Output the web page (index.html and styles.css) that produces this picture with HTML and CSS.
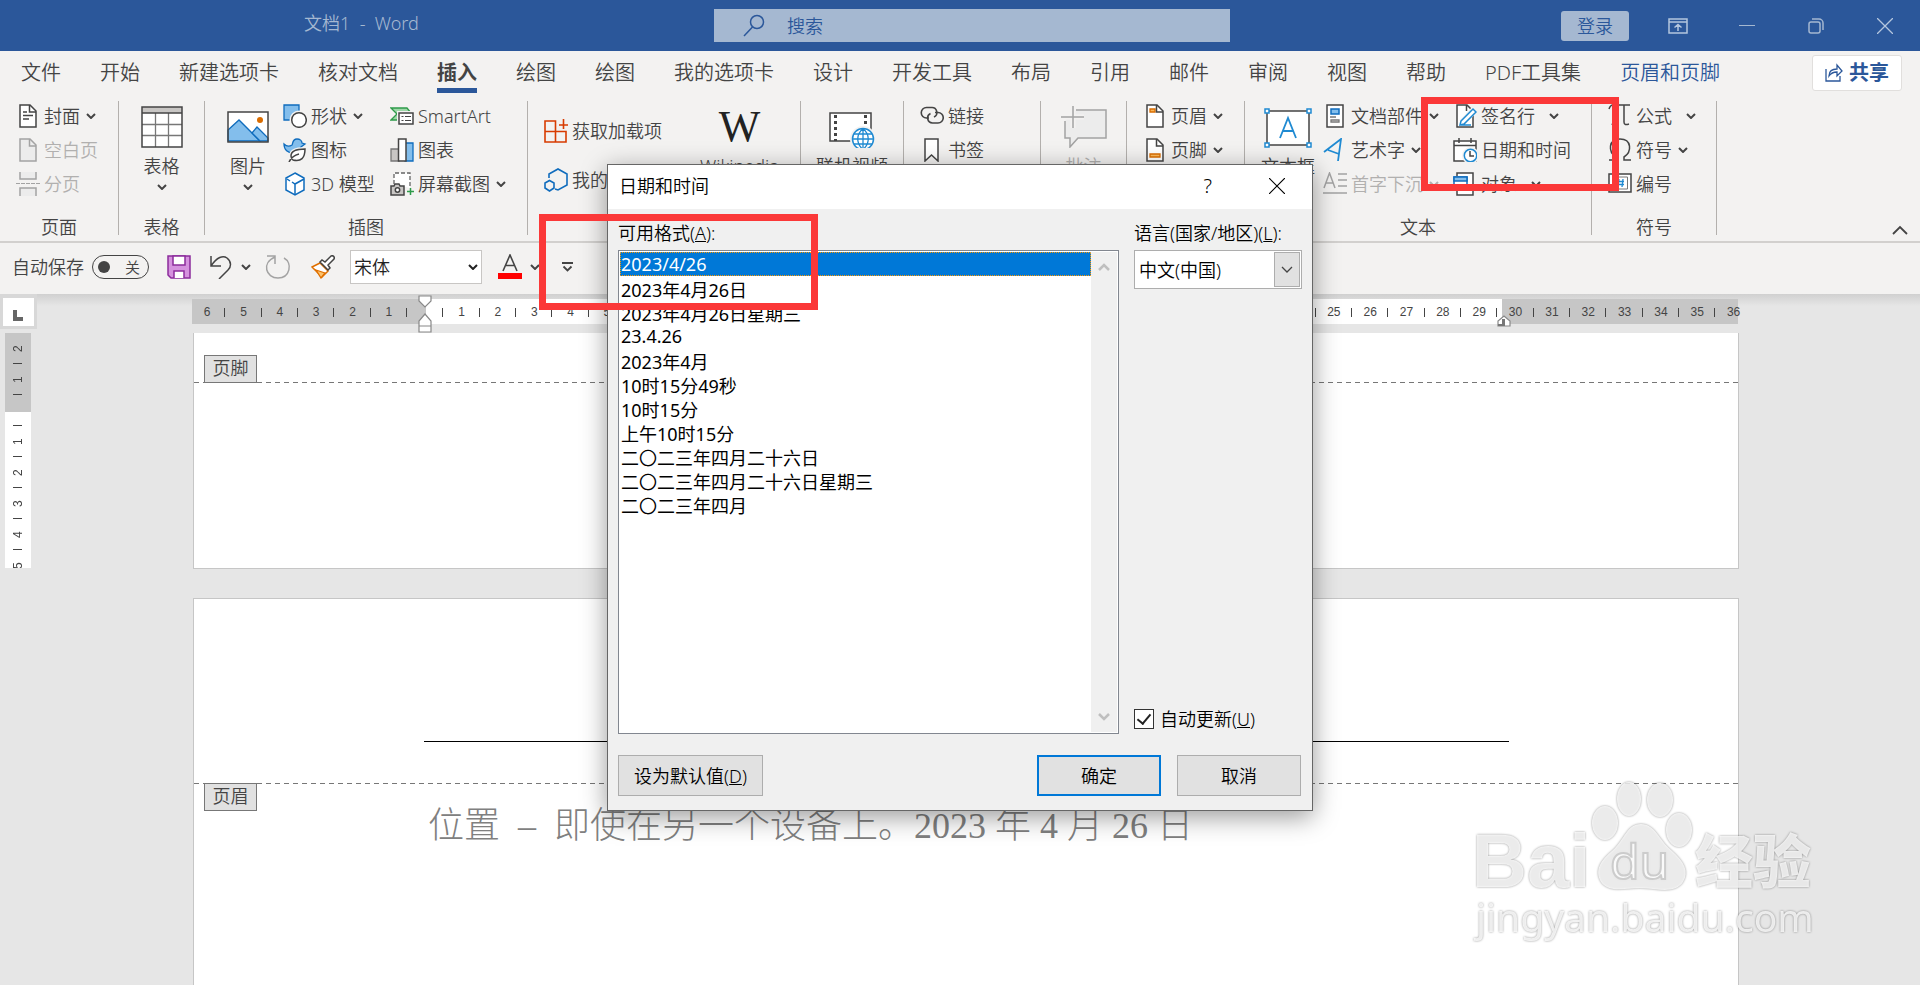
FILE: index.html
```
<!DOCTYPE html>
<html lang="zh-CN">

<head>
    <meta charset="UTF-8">
    <meta name="viewport" content="width=device-width, initial-scale=1.0">
    <title>文档1 - Word</title>
    <link rel="stylesheet" href="styles.css">
</head>

<body>
    <svg class="defs" aria-hidden="true">
        <symbol id="chev" viewBox="0 0 10 6"><path d="M1 1l4 4 4-4" fill="none" stroke="currentColor" stroke-width="2"/></symbol>
    </svg>

    <header class="titlebar">
        <div class="doc-title">文档1 &nbsp;- &nbsp;Word</div>
        <div class="search">
            <svg width="22" height="24" viewBox="0 0 22 24"><circle cx="14" cy="8" r="6.5" fill="none" stroke="#2b579a" stroke-width="1.5"/><path d="M9.500 13L1 22" stroke="#2b579a" stroke-width="1.5"/></svg>
            <input type="text" placeholder="搜索" aria-label="搜索">
        </div>
        <div class="window-controls">
            <button class="login">登录</button>
            <button class="win"><svg width="20" height="16" viewBox="0 0 20 16"><path d="M1 1h18v14H1zM1 4h18M10 13V7M6.500 9.500L10 6.500l3.500 3" fill="none" stroke="#b4c6de" stroke-width="1.500"/></svg></button>
            <button class="win"><svg width="16" height="16" viewBox="0 0 16 16"><path d="M0 7.500h16" stroke="#a5b8d1"/></svg></button>
            <button class="win"><svg width="16" height="16" viewBox="0 0 16 16"><rect x="1" y="4" width="11" height="11" rx="2" fill="none" stroke="#a5b8d1" stroke-width="1.500"/><path d="M4 1h7a4 4 0 0 1 4 4v7" fill="none" stroke="#a5b8d1" stroke-width="1.500"/></svg></button>
            <button class="win"><svg width="16" height="16" viewBox="0 0 16 16"><path d="M0 0l16 16M16 0L0 16" stroke="#b4c6de" stroke-width="1.300"/></svg></button>
        </div>
    </header>

    <nav class="tabs">
        <a href="#">文件</a>
        <a href="#">开始</a>
        <a href="#">新建选项卡</a>
        <a href="#">核对文档</a>
        <a href="#" class="active">插入</a>
        <a href="#">绘图</a>
        <a href="#">绘图</a>
        <a href="#">我的选项卡</a>
        <a href="#">设计</a>
        <a href="#">开发工具</a>
        <a href="#">布局</a>
        <a href="#">引用</a>
        <a href="#">邮件</a>
        <a href="#">审阅</a>
        <a href="#">视图</a>
        <a href="#">帮助</a>
        <a href="#">PDF工具集</a>
        <a href="#" class="context">页眉和页脚</a>
        <button class="share">
            <svg width="18" height="20" viewBox="0 0 18 20"><path d="M1 6v12h14v-5M4 13c0-5 3-7 8-7V2l5 6-5 5V9c-4 0-6 1-8 4z" fill="none" stroke="#2b579a" stroke-width="1.300"/></svg>
            共享
        </button>
    </nav>

    <div class="ribbon">
        <section class="group g-pages">
            <div class="content">
                <div class="col">
                    <button class="item"><svg class="icon" viewBox="0 0 24 24"><path d="M4 1h10l6 6v16H4z" fill="#fff" stroke="#444" stroke-width="1.500"/><path d="M13.500 1v7H20M7 8h4M7 11.500h10M7 15h6" fill="none" stroke="#444" stroke-width="1.500"/></svg>封面<svg class="chev"><use href="#chev"/></svg></button>
                    <button class="item off"><svg class="icon" viewBox="0 0 24 24"><path d="M4 1h10l6 6v16H4z" fill="#ececec" stroke="#a3a3a3" stroke-width="1.500"/><path d="M13.500 1v7H20" fill="none" stroke="#a3a3a3" stroke-width="1.500"/></svg>空白页</button>
                    <button class="item off"><svg class="icon" viewBox="0 0 24 24"><path d="M4 0v7h16V0M4 24v-8h16v8" fill="#ececec" stroke="#a3a3a3" stroke-width="1.500"/><path d="M0 11.500h24" stroke="#a3a3a3" stroke-dasharray="4 1"/></svg>分页</button>
                </div>
            </div>
            <div class="label">页面</div>
        </section>

        <section class="group g-table">
            <div class="content center">
                <button class="big">
                    <svg width="42" height="42" viewBox="0 0 42 42"><path d="M1 1h40v40H1z" fill="#fff"/><path d="M1 1h40v6H1z" fill="#c8c6c4"/><path d="M1 18.500h40M1 29.500h40M14.500 7v34M27.500 7v34" stroke="#777" stroke-width="1.300"/><path d="M1 1h40v40H1zM1 7h40" fill="none" stroke="#444" stroke-width="1.500"/></svg>
                    <span>表格</span>
                    <svg class="chev"><use href="#chev"/></svg>
                </button>
            </div>
            <div class="label">表格</div>
        </section>

        <section class="group g-illus">
            <div class="content">
                <button class="big">
                    <svg width="42" height="42" viewBox="0 0 42 42"><path d="M1 6h40v30H1z" fill="#fff"/><path d="M1 24l11-10 21 21H1z" fill="#83beec" stroke="#0f6cbd" stroke-width="1.300"/><path d="M25 27l5-6 11 11v3H33z" fill="#83beec" stroke="#0f6cbd" stroke-width="1.300"/><circle cx="33" cy="14" r="3" fill="#d96c00"/><path d="M1 6h40v30H1z" fill="none" stroke="#444" stroke-width="1.500"/></svg>
                    <span>图片</span>
                    <svg class="chev"><use href="#chev"/></svg>
                </button>
                <div class="col">
                    <button class="item"><svg class="icon" viewBox="0 0 24 24"><path d="M1 1h15v15H1z" fill="#83beec" stroke="#0f6cbd" stroke-width="1.300"/><circle cx="16" cy="16" r="9.500" fill="#f3f2f1"/><circle cx="16" cy="16" r="7.300" fill="#fff" stroke="#444" stroke-width="1.500"/></svg>形状<svg class="chev"><use href="#chev"/></svg></button>
                    <button class="item"><svg class="icon" viewBox="0 0 24 24"><path d="M1 6c2 2 5 3 8 1 1-1 0-6 5-6 3 0 5 2 5 4l3 1-4 3c-1 4-4 6-8 6-5 0-9-3-9-9z" fill="#83beec" stroke="#0f6cbd" stroke-width="1.300"/><path d="M22 11c-9 0-14 2-14 7 0 2 1 3 2 4 8 2 12-2 12-11z" fill="#fff" stroke="#f3f2f1" stroke-width="4"/><path d="M22 11c-9 0-14 2-14 7 0 2 1 3 2 4 8 2 12-2 12-11zM6 24c2-4 6-7 10-8" fill="#fff" stroke="#444" stroke-width="1.500"/></svg>图标</button>
                    <button class="item"><svg class="icon" viewBox="0 0 24 24"><path d="M12 1l9 5v12l-9 5-9-5V6z" fill="#fff" stroke="#0f6cbd" stroke-width="1.500"/><path d="M4 7l3 2m2 1l3 2 9-5M12 12v10" fill="none" stroke="#0f6cbd" stroke-width="1.500"/></svg>3D 模型</button>
                </div>
                <div class="col">
                    <button class="item"><svg class="icon" viewBox="0 0 24 24"><path d="M1 4h16l4 5v7H1l6-6z" fill="#9fd8a9" stroke="#2e9a49" stroke-width="1.300"/><path d="M9 9h14v11H9z" fill="#fff" stroke="#f3f2f1" stroke-width="4"/><path d="M9 9h14v11H9z" fill="#fff" stroke="#444" stroke-width="1.500"/><path d="M11.500 12.500h2m1.500 0h6m-9.500 4h2m1.500 0h6" stroke="#444"/></svg>SmartArt</button>
                    <button class="item"><svg class="icon" viewBox="0 0 24 24"><path d="M1 11h8v12H1z" fill="#c8c6c4" stroke="#777" stroke-width="1.300"/><path d="M15 5h8v18h-8z" fill="#83beec" stroke="#0f6cbd" stroke-width="1.300"/><path d="M8.500 1H16v22H8.500z" fill="#fff" stroke="#444" stroke-width="1.500"/></svg>图表</button>
                    <button class="item"><svg class="icon" viewBox="0 0 24 24"><path d="M4 12V1h16v15" fill="#fff" stroke="#666" stroke-width="1.300" stroke-dasharray="4 2"/><path d="M1 14h3l1-2h4l1 2h4v9H1z" fill="#c8c6c4" stroke="#444" stroke-width="1.500"/><circle cx="7.500" cy="18" r="2.200" fill="#fff" stroke="#444" stroke-width="1.500"/><path d="M20.500 16v7M17 19.500h7" stroke="#2e9a49" stroke-width="1.500"/></svg>屏幕截图<svg class="chev"><use href="#chev"/></svg></button>
                </div>
            </div>
            <div class="label">插图</div>
        </section>

        <section class="group g-addins">
            <div class="content">
                <div class="col wide">
                    <button class="item"><svg class="icon" viewBox="0 0 24 24"><path d="M1 2h10.500v21H1zM1 12.500h21V23H1M15 6h9M19.500 0v10" fill="none" stroke="#d83b01" stroke-width="1.600"/></svg>获取加载项</button>
                    <button class="item"><svg class="icon" viewBox="0 0 24 24"><path d="M5 10V6l9-5 9 5v11l-9 5-3-1" fill="none" stroke="#0f6cbd" stroke-width="1.600"/><path d="M5.500 12.500l4.500 2.500v5l-4.500 3L1 20v-5z" fill="none" stroke="#0f6cbd" stroke-width="1.600"/></svg>我的加载项</button>
                </div>
                <button class="big wiki">
                    <span class="wiki-w">W</span>
                    <span>Wikipedia</span>
                </button>
            </div>
            <div class="label">加载项</div>
        </section>

        <section class="group g-media">
            <div class="content center">
                <button class="big">
                    <svg width="46" height="42" viewBox="0 0 46 42"><path d="M1 7h41v28H1z" fill="#fff" stroke="#444" stroke-width="1.500"/><path d="M6.500 9v26M36.500 9v26" stroke="#444" stroke-width="3" stroke-dasharray="3 3"/><circle cx="34" cy="33" r="13" fill="#f3f2f1"/><circle cx="34" cy="33" r="10.500" fill="#fff" stroke="#1f8ad2" stroke-width="1.500"/><path d="M23.500 33h21M25 28h18M25 38h18M34 22.500v21M34 22.500c-7 6-7 15 0 21M34 22.500c7 6 7 15 0 21" fill="none" stroke="#1f8ad2" stroke-width="1.300"/></svg>
                    <span>联机视频</span>
                </button>
            </div>
            <div class="label">媒体</div>
        </section>

        <section class="group g-links">
            <div class="content">
                <div class="col">
                    <button class="item"><svg class="icon" viewBox="0 0 24 24"><path d="M9 14H6.500a5 5 0 0 1 0-10.500h5a5 5 0 0 1 2.500 9.500" fill="none" stroke="#444" stroke-width="1.600"/><path d="M15 8.500h3a5 5 0 0 1 0 10.500h-5.500a5 5 0 0 1-2-9.500" fill="none" stroke="#444" stroke-width="1.600"/></svg>链接</button>
                    <button class="item"><svg class="icon" viewBox="0 0 24 24"><path d="M5 1h13v22l-6.500-6L5 23z" fill="#fff" stroke="#444" stroke-width="1.500"/></svg>书签</button>
                </div>
            </div>
            <div class="label">链接</div>
        </section>

        <section class="group g-comment">
            <div class="content center">
                <button class="big off">
                    <svg width="46" height="42" viewBox="0 0 46 42"><path d="M15 4h30v28H17l-8 9v-9H4V15" fill="#ececec" stroke="#a3a3a3" stroke-width="1.500"/><path d="M12 0v22M0 11h23" stroke="#f3f2f1" stroke-width="5"/><path d="M12 0v22M0 11h23" stroke="#a3a3a3" stroke-width="1.500"/></svg>
                    <span>批注</span>
                </button>
            </div>
            <div class="label">批注</div>
        </section>

        <section class="group g-header">
            <div class="content">
                <div class="col">
                    <button class="item"><svg class="icon" viewBox="0 0 24 24"><path d="M4 1h10l6 6v16H4z" fill="#fff" stroke="#444" stroke-width="1.500"/><path d="M7 5h5v3H7z" fill="#fcb95a" stroke="#d96c00" stroke-width="1.300"/><path d="M13.500 1v7H20" fill="none" stroke="#444" stroke-width="1.500"/></svg>页眉<svg class="chev"><use href="#chev"/></svg></button>
                    <button class="item"><svg class="icon" viewBox="0 0 24 24"><path d="M4 1h10l6 6v16H4z" fill="#fff" stroke="#444" stroke-width="1.500"/><path d="M7 16h10v3H7z" fill="#fcb95a" stroke="#d96c00" stroke-width="1.300"/><path d="M13.500 1v7H20" fill="none" stroke="#444" stroke-width="1.500"/></svg>页脚<svg class="chev"><use href="#chev"/></svg></button>
                </div>
            </div>
            <div class="label">页眉和页脚</div>
        </section>

        <section class="group g-text">
            <div class="content">
                <button class="big">
                    <svg width="48" height="42" viewBox="0 0 48 42"><path d="M3 5h42v34H3z" fill="#fff" stroke="#444" stroke-width="1.500"/><path d="M16 32l8-20 8 20M19 25h10" fill="none" stroke="#1f8ad2" stroke-width="1.800"/><path d="M1 3h4v4H1zM43 3h4v4h-4zM1 37h4v4H1zM43 37h4v4h-4z" fill="#fff" stroke="#1f8ad2" stroke-width="1.500"/></svg>
                    <span>文本框</span>
                </button>
                <div class="col">
                    <button class="item"><svg class="icon" viewBox="0 0 24 24"><path d="M4 1h16v22H4z" fill="#fff" stroke="#444" stroke-width="1.500"/><path d="M8 5h8v5H8z" fill="#83beec" stroke="#0f6cbd" stroke-width="1.500"/><path d="M7 13h6M8 16h8v2H8z" fill="none" stroke="#777" stroke-width="1.300"/></svg>文档部件<svg class="chev"><use href="#chev"/></svg></button>
                    <button class="item"><svg class="icon" viewBox="0 0 24 24"><path d="M1 14L18 1l-3 22M5 12l11 4" fill="none" stroke="#1f8ad2" stroke-width="1.800"/></svg>艺术字<svg class="chev"><use href="#chev"/></svg></button>
                    <button class="item off"><svg class="icon" viewBox="0 0 24 24"><path d="M1 16L6.500 1 12 16M3 11h7M15 2h9M15 8h9M15 14h9M0 21h24" fill="none" stroke="#a3a3a3" stroke-width="1.500"/></svg>首字下沉<svg class="chev"><use href="#chev"/></svg></button>
                </div>
                <div class="col third">
                    <button class="item gap"><svg class="icon" viewBox="0 0 24 24"><path d="M4 1h10l6 6v16H4z" fill="#fff" stroke="#444" stroke-width="1.500"/><path d="M13.500 1v6" fill="none" stroke="#444" stroke-width="1.500"/><path d="M9 19L22 5" stroke="#f3f2f1" stroke-width="7"/><path d="M8 17L20 5l3 3-12 12-4 1zM7 21h11" fill="#fff" stroke="#1f8ad2" stroke-width="1.500"/></svg>签名行<svg class="chev"><use href="#chev"/></svg></button>
                    <button class="item"><svg class="icon" viewBox="0 0 24 24"><path d="M1 3h22v20H1z" fill="#fff" stroke="#444" stroke-width="1.500"/><path d="M1 7.500h22M6 0v5M18 0v5" stroke="#444" stroke-width="1.500"/><circle cx="17.500" cy="17.500" r="8.500" fill="#f3f2f1"/><circle cx="17.500" cy="17.500" r="6.200" fill="#fff" stroke="#1f8ad2" stroke-width="1.500"/><path d="M17 13v5h4" fill="none" stroke="#444" stroke-width="1.500"/></svg>日期和时间</button>
                    <button class="item gap"><svg class="icon" viewBox="0 0 24 24"><path d="M4 4V1h16v22H4v-5" fill="#fff" stroke="#444" stroke-width="1.500"/><path d="M1 5h13v13H1z" fill="#fff" stroke="#0f6cbd" stroke-width="1.500"/><path d="M1 5h13v4H1z" fill="#83beec" stroke="#0f6cbd" stroke-width="1.500"/></svg>对象<svg class="chev"><use href="#chev"/></svg></button>
                </div>
            </div>
            <div class="label">文本</div>
        </section>

        <section class="group g-symbols">
            <div class="content">
                <div class="col">
                    <button class="item gap"><svg class="icon" viewBox="0 0 24 24"><path d="M1 5c1-3 2-4 4-4h17M8 1c0 9-1 15-4 20M16 1v17c0 3 2 3 5 2" fill="none" stroke="#444" stroke-width="1.500"/></svg>公式<svg class="chev"><use href="#chev"/></svg></button>
                    <button class="item"><svg class="icon" viewBox="0 0 24 24"><path d="M1 22h7v-3C0 14 0 1 12 1s12 13 4 18v3h7" fill="none" stroke="#444" stroke-width="1.500"/></svg>符号<svg class="chev"><use href="#chev"/></svg></button>
                    <button class="item"><svg class="icon" viewBox="0 0 24 24"><path d="M1 2h22v18H1z" fill="#fff" stroke="#444" stroke-width="1.500"/><path d="M4.500 5h15v12h-15z" fill="none" stroke="#777"/><path d="M11 7l-1 8M15 7l-1 8M9 9.500h7M9 12.500h7" stroke="#1f8ad2" stroke-width="1.300"/></svg>编号</button>
                </div>
            </div>
            <div class="label">符号</div>
        </section>

        <button class="collapse"><svg width="16" height="10" viewBox="0 0 16 10"><path d="M1 9l7-7 7 7" fill="none" stroke="#444" stroke-width="1.800"/></svg></button>
    </div>

    <div class="quickbar">
        <label class="autosave">自动保存 <button class="toggle"><i></i>关</button></label>
        <button class="q-save"><svg width="24" height="24" viewBox="0 0 24 24"><path d="M1 1h22v22H4l-3-3z" fill="#d592de" stroke="#8c2d9c" stroke-width="1.500"/><path d="M6 1h12v9H6zM7 23v-7h10v7" fill="#fff" stroke="#8c2d9c" stroke-width="1.500"/></svg></button>
        <button class="q-undo"><svg width="24" height="24" viewBox="0 0 24 24"><path d="M2 1v10h10M2 11C8 2 14 0 18 3c5 4 4 9 1 12l-9 9" fill="none" stroke="#444" stroke-width="1.500"/></svg><svg class="chev"><use href="#chev"/></svg></button>
        <button class="q-redo"><svg width="26" height="24" viewBox="0 0 26 24"><path d="M2 1h8v8M10 2C-4 8 1 23 13 23c12 0 15-15 6-20" fill="none" stroke="#a3a3a3" stroke-width="1.500"/></svg></button>
        <button class="q-brush"><svg width="24" height="24" viewBox="0 0 24 24"><path d="M1 12l8-4 8 8-6 6z" fill="#fff" stroke="#e07000" stroke-width="1.500"/><path d="M5 15l9 3-4 5z" fill="#fcc36e" stroke="#e07000" stroke-width="1.300"/><path d="M9 7l2-2 3 2 6-6c2-1 4 1 3 3l-6 6 2 3-2 2z" fill="#fff" stroke="#444" stroke-width="1.500"/></svg></button>
        <div class="font-box">
            <select aria-label="字体"><option>宋体</option></select>
            <svg class="chev"><use href="#chev"/></svg>
        </div>
        <button class="q-color"><svg width="24" height="26" viewBox="0 0 24 26"><path d="M5 17L12 1l7 16M7.500 11.500h9" fill="none" stroke="#444" stroke-width="1.600"/><path d="M0 19h24v6H0z" fill="#f00"/></svg><svg class="chev"><use href="#chev"/></svg></button>
        <button class="q-more"><svg width="11" height="10" viewBox="0 0 11 10"><path d="M0 1h11M1.500 4.500l4 4 4-4" fill="none" stroke="#444" stroke-width="1.800"/></svg></button>
    </div>

    <main class="workspace">
        <div class="top-row">
            <div class="tab-stop"><svg width="31" height="28" viewBox="0 0 31 28"><path d="M12 12v9h8" fill="none" stroke="#666" stroke-width="4"/></svg></div>
            <div class="ruler">
                <div class="cells">
                    <span>6</span><span>5</span><span>4</span><span>3</span><span>2</span><span>1</span><span></span><span>1</span><span>2</span><span>3</span><span>4</span><span>5</span><span>6</span><span>7</span><span>8</span><span>9</span><span>10</span><span>11</span><span>12</span><span>13</span><span>14</span><span>15</span><span>16</span><span>17</span><span>18</span><span>19</span><span>20</span><span>21</span><span>22</span><span>23</span><span>24</span><span>25</span><span>26</span><span>27</span><span>28</span><span>29</span><span>30</span><span>31</span><span>32</span><span>33</span><span>34</span><span>35</span><span>36</span>
                </div>
                <svg class="marker left" width="14" height="38" viewBox="0 0 14 38"><path d="M1 1h12v5l-6 6-6-6zM1 37V26l6-7 6 7v11zM1 31h12" fill="#fff" stroke="#888" stroke-width="1.200"/></svg>
                <svg class="marker right" width="14" height="12" viewBox="0 0 14 12"><path d="M1 11V6l6-5 6 5v5z" fill="#fff" stroke="#888" stroke-width="1.200"/><path d="M1 9h4V4h3v7H1z" fill="#777"/></svg>
            </div>
        </div>
        <div class="canvas">
            <div class="vruler">
                <span>2</span><span>1</span><span></span><span>1</span><span>2</span><span>3</span><span>4</span><span>5</span>
            </div>
            <div class="pages">
                <div class="page first">
                    <div class="tag above">页脚</div>
                    <div class="dash"></div>
                </div>
                <div class="page second">
                    <div class="rule"></div>
                    <div class="dash"></div>
                    <div class="tag below">页眉</div>
                    <p class="body-text">位置&ensp;–&ensp;即使在另一个设备上。2023 年 4 月 26 日</p>
                </div>
            </div>
        </div>
    </main>

    <div class="dialog" role="dialog" aria-labelledby="dlg-title">
        <div class="dlg-head">
            <span id="dlg-title">日期和时间</span>
            <button class="help">?</button>
            <button class="close"><svg width="16" height="16" viewBox="0 0 16 16"><path d="M0 0l16 16M16 0L0 16" stroke="#000" stroke-width="1.200"/></svg></button>
        </div>
        <div class="dlg-body">
            <div class="formats">
                <label for="formats">可用格式(<u>A</u>):</label>
                <div class="listbox">
                    <select id="formats" size="11">
                        <option selected>2023/4/26</option>
                        <option>2023年4月26日</option>
                        <option>2023年4月26日星期三</option>
                        <option>23.4.26</option>
                        <option>2023年4月</option>
                        <option>10时15分49秒</option>
                        <option>10时15分</option>
                        <option>上午10时15分</option>
                        <option>二〇二三年四月二十六日</option>
                        <option>二〇二三年四月二十六日星期三</option>
                        <option>二〇二三年四月</option>
                    </select>
                    <div class="scroll">
                        <svg width="12" height="9" viewBox="0 0 12 9"><path d="M1 8l5-5 5 5" fill="none" stroke="#bfbfbf" stroke-width="2.500"/></svg>
                        <svg width="12" height="9" viewBox="0 0 12 9"><path d="M1 1l5 5 5-5" fill="none" stroke="#bfbfbf" stroke-width="2.500"/></svg>
                    </div>
                </div>
            </div>
            <div class="options">
                <label for="lang">语言(国家/地区)(<u>L</u>):</label>
                <div class="lang-box">
                    <select id="lang"><option>中文(中国)</option></select>
                    <span class="drop"><svg width="12" height="8" viewBox="0 0 12 8"><path d="M1 1l5 5 5-5" fill="none" stroke="#444" stroke-width="1.300"/></svg></span>
                </div>
                <label class="auto"><input type="checkbox" checked><span>自动更新(<u>U</u>)</span></label>
            </div>
        </div>
        <div class="dlg-foot">
            <button class="btn default">设为默认值(<u>D</u>)</button>
            <button class="btn ok">确定</button>
            <button class="btn">取消</button>
        </div>
    </div>

    <div class="mark mark-formats"></div>
    <div class="mark mark-datetime"></div>

    <svg class="watermark" width="370" height="180" viewBox="0 0 370 180">
        <g fill="#fff" fill-opacity=".8">
            <text class="wm-logo" x="12" y="117">Bai</text>
            <ellipse cx="145" cy="53" rx="13" ry="17"/>
            <ellipse cx="169" cy="29" rx="12" ry="17"/>
            <ellipse cx="200" cy="30" rx="13" ry="17"/>
            <ellipse cx="219" cy="60" rx="13" ry="17"/>
            <path d="M181 54c14 0 18 16 30 26 14 12 18 22 12 32-8 12-24 7-43 6-18 1-32 4-39-6-7-12 0-22 12-32 12-11 14-26 28-26z"/>
            <text class="wm-du" x="150" y="109">du</text>
            <text class="wm-cn" x="235" y="113">经验</text>
            <text class="wm-url" x="16" y="162">jingyan.baidu.com</text>
        </g>
    </svg>
</body>

</html>
```
FILE: styles.css
```
* {
    box-sizing: border-box;
}

body {
    font-family: "Noto Sans", "Noto Sans CJK SC", sans-serif;
    font-size: 18px;
    font-weight: 350;
    line-height: 24px;
    color: #444;
    background-color: #e6e6e6;
    margin: 0;
    height: 100vh;
    overflow: hidden;
    display: flex;
    flex-direction: column;
    position: relative;
}

button,
input,
select {
    font: inherit;
    color: inherit;
    margin: 0;
    padding: 0;
    border: none;
    background: none;
    outline: none;
}

svg {
    display: block;
    flex: none;
}

.defs {
    position: absolute;
    width: 0;
    height: 0;
}

.chev {
    width: 10px;
    height: 6px;
}

/* title bar */
.titlebar {
    background-color: #2b579a;
    height: 51px;
    flex: none;
    display: flex;
    align-items: center;
    color: #a5b8d1;
}

.doc-title {
    width: 714px;
    padding-left: 304px;
    padding-bottom: 6px;
    white-space: nowrap;
}

.search {
    flex: 0 0 516px;
    height: 33px;
    background-color: #a5b8d1;
    display: flex;
    align-items: center;
    gap: 22px;
    padding-left: 29px;
}

.search input {
    flex: 1;
    min-width: 0;
}

.search input::placeholder {
    color: #2b579a;
    opacity: 1;
}

.window-controls {
    margin-left: auto;
    padding-right: 1px;
    display: flex;
    align-items: center;
}

.login {
    width: 68px;
    height: 30px;
    border-radius: 3px;
    background-color: #a5b8d1;
    color: #2b579a;
    margin-right: 14px;
}

.win {
    width: 69px;
    height: 50px;
    display: flex;
    align-items: center;
    justify-content: center;
}

/* tabs */
.tabs {
    flex: none;
    height: 50px;
    background-color: #f3f2f1;
    padding: 4px 18px 0 21px;
    display: flex;
    gap: 39px;
    font-size: 20px;
    white-space: nowrap;
}

.tabs a {
    height: 38px;
    line-height: 36px;
    color: #444;
    text-decoration: none;
}

.tabs .active {
    font-weight: bold;
    border-bottom: 5px solid #2b579a;
}

.tabs .context {
    color: #2b579a;
}

.share {
    margin-left: auto;
    width: 90px;
    height: 36px;
    background-color: #fff;
    border: 1px solid #e1dfdd;
    border-radius: 3px;
    color: #2b579a;
    font-weight: bold;
    display: flex;
    align-items: center;
    justify-content: center;
    gap: 6px;
}

/* ribbon */
.ribbon {
    flex: none;
    height: 142px;
    background-color: #f3f2f1;
    border-bottom: 2px solid #d2d0ce;
    padding-bottom: 6px;
    display: flex;
    white-space: nowrap;
}

.group {
    flex: none;
    border-right: 1px solid #b3b0ad;
    display: flex;
    flex-direction: column;
}

.content {
    flex: 1;
    display: flex;
}

.content.center {
    justify-content: center;
}

.label {
    text-align: center;
    line-height: 16px;
}

.col {
    display: flex;
    flex-direction: column;
    align-items: flex-start;
    gap: 4px;
}

.col.wide {
    gap: 19px;
    padding-top: 15px;
}

.item {
    height: 30px;
    display: flex;
    align-items: center;
    gap: 4px;
}

.item .chev {
    margin-left: 2px;
}

.item.gap .chev {
    margin-left: 10px;
}

.off {
    color: #b1b0af;
}

.icon {
    width: 24px;
    height: 24px;
}

.big {
    height: 100px;
    display: flex;
    flex-direction: column;
    align-items: center;
    padding-top: 5px;
    gap: 6px;
}

.wiki-w {
    font-family: "Liberation Serif", serif;
    font-size: 44px;
    font-weight: normal;
    line-height: 42px;
    color: #222;
}

.g-pages {
    width: 119px;
}

.g-pages .content {
    padding-left: 16px;
}

.g-table {
    width: 86px;
}

.g-illus {
    width: 323px;
}

.g-illus .content {
    padding-left: 22px;
    gap: 14px;
}

.g-illus .col {
    width: 93px;
}

.g-addins {
    width: 273px;
}

.g-addins .content {
    padding-left: 16px;
    gap: 38px;
}

.g-media {
    width: 103px;
}

.g-links {
    width: 137px;
}

.g-links .content {
    padding-left: 16px;
}

.g-comment {
    width: 86px;
}

.g-header {
    width: 118px;
}

.g-header .content {
    padding-left: 16px;
}

.g-text {
    width: 347px;
}

.g-text .content {
    padding-left: 16px;
    gap: 8px;
}

.g-text .third {
    padding-left: 6px;
}

.g-symbols {
    width: 125px;
}

.g-symbols .content {
    padding-left: 16px;
}

.collapse {
    margin: auto 12px 0 auto;
}

/* quick access bar */
.quickbar {
    flex: none;
    height: 51px;
    background-color: #f3f2f1;
    padding: 0 12px 3px;
    display: flex;
    align-items: center;
    white-space: nowrap;
}

.quickbar button {
    display: flex;
    align-items: center;
    gap: 8px;
}

.autosave {
    display: flex;
    align-items: center;
    gap: 8px;
}

.autosave .toggle {
    width: 57px;
    height: 24px;
    border: 1px solid #444;
    border-radius: 12px;
    font-size: 15px;
    justify-content: space-between;
    padding: 0 8px 0 5px;
}

.toggle i {
    width: 12px;
    height: 12px;
    border-radius: 50%;
    background-color: #444;
}

.q-save,
.q-undo {
    margin-left: 18px;
}

.q-redo {
    margin-left: 14px;
}

.q-brush {
    margin-left: 20px;
}

.font-box {
    width: 132px;
    height: 34px;
    margin: 0 16px 0 15px;
    border: 1px solid #c8c6c4;
    background-color: #fff;
    color: #222;
    display: flex;
    align-items: center;
    padding: 0 3px;
}

.font-box select,
.lang-box select {
    appearance: none;
    flex: 1;
    min-width: 0;
}

.q-more {
    margin-left: 22px;
}

/* workspace */
.workspace {
    flex: 1;
    min-height: 0;
    overflow: hidden;
    display: flex;
    flex-direction: column;
    background: linear-gradient(#d0d0d0, #e6e6e6 12px);
}

.top-row {
    flex: none;
    height: 39px;
    display: flex;
    align-items: flex-start;
}

.tab-stop {
    border: 3px solid #d8d8d8;
    border-top-width: 4px;
    background-color: #fff;
}

.ruler {
    position: relative;
    flex: 1;
    margin: 5px 182px 0 155px;
    height: 25px;
    background: linear-gradient(90deg, #c6c6c6 234px, #fff 234px, #fff 1310px, #c6c6c6 1310px);
}

.cells {
    display: flex;
    margin: 0 -14px 0 -3px;
    height: 25px;
}

.cells span {
    flex: 1 0 0;
    position: relative;
    text-align: center;
    font: 12px/27px "Liberation Sans", sans-serif;
}

.cells span:not(:last-child)::after {
    content: "";
    position: absolute;
    right: 0;
    top: 9px;
    height: 9px;
    border-right: 1px solid #444;
}

.marker {
    position: absolute;
}

.marker.left {
    left: 226px;
    top: -4px;
}

.marker.right {
    left: 1305px;
    top: 16px;
}

.canvas {
    flex: 1;
    min-height: 0;
    display: flex;
    padding-left: 5px;
}

.vruler {
    width: 26px;
    height: 235px;
    overflow: hidden;
    background: linear-gradient(#c6c6c6 79px, #fff 79px);
}

.vruler span {
    display: block;
    width: 26px;
    height: 31px;
    position: relative;
    writing-mode: vertical-rl;
    transform: rotate(180deg);
    text-align: center;
    font: 12px/26px "Liberation Sans", sans-serif;
}

.vruler span::after {
    content: "";
    position: absolute;
    left: 9px;
    top: 0;
    width: 9px;
    border-top: 1px solid #444;
}

.pages {
    flex: 1;
    margin: 0 181px 0 162px;
    display: flex;
    flex-direction: column;
    gap: 29px;
}

.page {
    background-color: #fff;
    border: 1px solid #c6c6c6;
}

.page.first {
    flex: none;
    height: 236px;
    border-top: none;
    padding-top: 22px;
}

.page.second {
    flex: 1;
    border-bottom: none;
}

.tag {
    width: 53px;
    height: 28px;
    margin-left: 10px;
    border: 1px solid #777;
    background-color: #e1e1e1;
    line-height: 25px;
    text-align: center;
}

.tag.above {
    margin-bottom: -1px;
}

.tag.below {
    margin-top: -1px;
}

.dash {
    height: 1px;
    background: repeating-linear-gradient(90deg, #777 0 5px, transparent 5px 9px);
}

.rule {
    border-top: 1px solid #000;
    margin: 142px 229px 41px 230px;
}

.body-text {
    margin: 0 0 0 234px;
    font-family: "Liberation Serif", "Noto Sans CJK SC", serif;
    font-weight: 300;
    font-size: 36px;
    line-height: 30px;
    color: #808080;
}

/* dialog */
.dialog {
    position: absolute;
    left: 607px;
    top: 164px;
    width: 706px;
    height: 647px;
    border: 1px solid #666;
    background-color: #f0f0f0;
    box-shadow: 0 6px 24px rgba(0, 0, 0, 0.4);
    color: #000;
    display: flex;
    flex-direction: column;
    white-space: nowrap;
}

.dlg-head {
    height: 44px;
    background-color: #fff;
    display: flex;
    align-items: center;
    padding: 0 27px 2px 11px;
}

.help {
    margin-left: auto;
    margin-right: 57px;
    font-size: 20px;
}

.dlg-body {
    flex: 1;
    display: flex;
    gap: 15px;
    padding: 12px 10px 0;
}

.formats {
    flex: 1;
    display: flex;
    flex-direction: column;
}

.listbox {
    height: 484px;
    margin-top: 5px;
    border: 1px solid #828790;
    background-color: #fff;
    display: flex;
    padding: 1px;
}

.listbox select {
    flex: 1;
    height: 480px;
    overflow: hidden;
    color: #000;
}

.listbox option {
    height: 24px;
    min-height: 24px;
    line-height: 24px;
    padding: 0 1px;
    color: #000;
}

.listbox option:checked {
    background: #0078d7 linear-gradient(#0078d7, #0078d7);
    color: #fff;
    outline: 1px dotted #f90;
    outline-offset: -1px;
}

.scroll {
    width: 26px;
    background-color: #f0f0f0;
    display: flex;
    flex-direction: column;
    align-items: center;
    justify-content: space-between;
    padding: 10px 0;
}

.options {
    width: 168px;
    display: flex;
    flex-direction: column;
}

.lang-box {
    height: 39px;
    margin-top: 5px;
    border: 1px solid #adadad;
    background-color: #fff;
    display: flex;
    padding: 1px 1px 1px 4px;
}

.drop {
    width: 26px;
    border: 1px solid #adadad;
    background-color: #e1e1e1;
    display: flex;
    align-items: center;
    justify-content: center;
}

.auto {
    margin-top: 418px;
    display: flex;
    align-items: center;
    gap: 6px;
}

.auto input {
    appearance: none;
    width: 20px;
    height: 20px;
    border: 1px solid #333;
    background-color: #fff;
    display: flex;
    align-items: center;
    justify-content: center;
}

.auto input:checked::after {
    content: "";
    width: 6px;
    height: 11px;
    margin-bottom: 3px;
    border: solid #222;
    border-width: 0 2px 2px 0;
    transform: rotate(40deg);
}

.dlg-foot {
    display: flex;
    gap: 16px;
    padding: 0 11px 14px 10px;
}

.btn {
    width: 124px;
    height: 41px;
    border: 1px solid #adadad;
    background-color: #e1e1e1;
}

.btn.default {
    width: 145px;
    margin-right: auto;
}

.btn.ok {
    border: 2px solid #0078d7;
}

/* red frames over the steps */
.mark {
    position: absolute;
    border: 7px solid #fb3838;
    pointer-events: none;
}

.mark-formats {
    left: 539px;
    top: 214px;
    width: 279px;
    height: 96px;
}

.mark-datetime {
    left: 1421px;
    top: 97px;
    width: 198px;
    height: 94px;
}

.watermark {
    position: absolute;
    left: 1460px;
    top: 770px;
    filter: drop-shadow(0 0 1px rgba(0, 0, 0, 0.5));
    pointer-events: none;
}

.wm-logo {
    font: bold 76px "Liberation Sans", sans-serif;
}

.wm-du {
    font: 48px "Noto Sans", sans-serif;
    stroke: #ccc;
    stroke-width: 2px;
}

.wm-cn {
    font: 900 58px "Noto Sans CJK SC", sans-serif;
}

.wm-url {
    font: 39px "Noto Sans", sans-serif;
}
```
